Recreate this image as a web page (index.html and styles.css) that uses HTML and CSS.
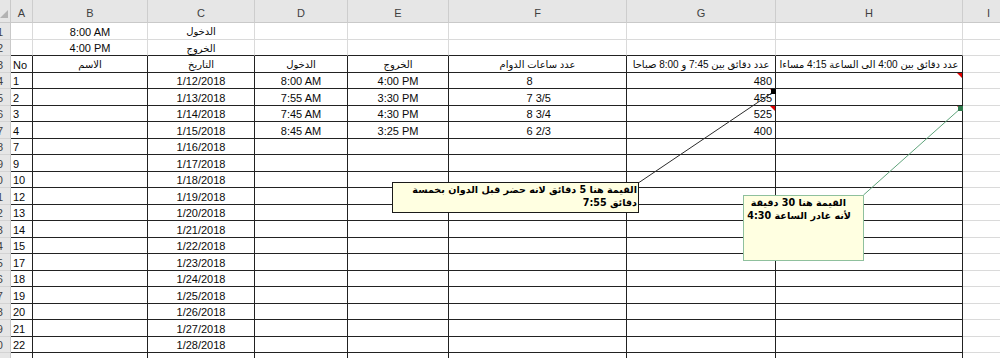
FILE: index.html
```html
<!DOCTYPE html>
<html>
<head>
<meta charset="utf-8">
<link rel="stylesheet" href="styles.css">
</head>
<body>
<div class="sheet">
  <!-- header row -->
  <div class="corner"><i class="tri"></i></div>
  <div class="hd">A</div><div class="hd">B</div><div class="hd">C</div><div class="hd">D</div><div class="hd">E</div><div class="hd">F</div><div class="hd">G</div><div class="hd">H</div><div class="hd">I</div>

  <!-- row 1 -->
  <div class="rh"><span>1</span></div>
  <div class="g"></div><div class="g c">8:00 AM</div><div class="g c ar" dir="rtl">الدخول</div><div class="g"></div><div class="g"></div><div class="g"></div><div class="g"></div><div class="g"></div><div class="g"></div>
  <!-- row 2 -->
  <div class="rh"><span>2</span></div>
  <div class="g tb"></div><div class="g tb c">4:00 PM</div><div class="g tb c ar" dir="rtl">الخروج</div><div class="g tb"></div><div class="g tb"></div><div class="g tb"></div><div class="g tb"></div><div class="g tb"></div><div class="g"></div>
  <!-- row 3 -->
  <div class="rh"><span>3</span></div>
  <div class="t l">No</div><div class="t c ar" dir="rtl">الاسم</div><div class="t c ar" dir="rtl">التاريخ</div><div class="t c ar" dir="rtl">الدخول</div><div class="t c ar" dir="rtl">الخروج</div><div class="t c ar" dir="rtl">عدد ساعات الدوام</div><div class="t c ar" dir="rtl">عدد دقائق بين 7:45 و 8:00 صباحا</div><div class="t c ar" dir="rtl">عدد دقائق بين 4:00 الى الساعة 4:15 مساءا</div><div class="g"></div>
  <!-- row 4 -->
  <div class="rh"><span>4</span></div>
  <div class="t l">1</div><div class="t"></div><div class="t c">1/12/2018</div><div class="t c">8:00 AM</div><div class="t c">4:00 PM</div><div class="t c"><span class="fr">8</span></div><div class="t r">480</div><div class="t note"></div><div class="g"></div>
  <!-- row 5 -->
  <div class="rh"><span>5</span></div>
  <div class="t l">2</div><div class="t"></div><div class="t c">1/13/2018</div><div class="t c">7:55 AM</div><div class="t c">3:30 PM</div><div class="t c"><span class="fr">7 3/5</span></div><div class="t r note">455</div><div class="t"></div><div class="g"></div>
  <!-- row 6 -->
  <div class="rh"><span>6</span></div>
  <div class="t l">3</div><div class="t"></div><div class="t c">1/14/2018</div><div class="t c">7:45 AM</div><div class="t c">4:30 PM</div><div class="t c"><span class="fr">8 3/4</span></div><div class="t r note">525</div><div class="t note"></div><div class="g"></div>
  <!-- row 7 -->
  <div class="rh"><span>7</span></div>
  <div class="t l">4</div><div class="t"></div><div class="t c">1/15/2018</div><div class="t c">8:45 AM</div><div class="t c">3:25 PM</div><div class="t c"><span class="fr">6 2/3</span></div><div class="t r">400</div><div class="t"></div><div class="g"></div>
  <!-- row 8 -->
  <div class="rh"><span>8</span></div>
  <div class="t l">7</div><div class="t"></div><div class="t c">1/16/2018</div><div class="t"></div><div class="t"></div><div class="t"></div><div class="t"></div><div class="t"></div><div class="g"></div>
  <!-- row 9 -->
  <div class="rh"><span>9</span></div>
  <div class="t l">9</div><div class="t"></div><div class="t c">1/17/2018</div><div class="t"></div><div class="t"></div><div class="t"></div><div class="t"></div><div class="t"></div><div class="g"></div>
  <!-- row 10 -->
  <div class="rh"><span>10</span></div>
  <div class="t l">10</div><div class="t"></div><div class="t c">1/18/2018</div><div class="t"></div><div class="t"></div><div class="t"></div><div class="t"></div><div class="t"></div><div class="g"></div>
  <!-- row 11 -->
  <div class="rh"><span>11</span></div>
  <div class="t l">12</div><div class="t"></div><div class="t c">1/19/2018</div><div class="t"></div><div class="t"></div><div class="t"></div><div class="t"></div><div class="t"></div><div class="g"></div>
  <!-- row 12 -->
  <div class="rh"><span>12</span></div>
  <div class="t l">13</div><div class="t"></div><div class="t c">1/20/2018</div><div class="t"></div><div class="t"></div><div class="t"></div><div class="t"></div><div class="t"></div><div class="g"></div>
  <!-- row 13 -->
  <div class="rh"><span>13</span></div>
  <div class="t l">14</div><div class="t"></div><div class="t c">1/21/2018</div><div class="t"></div><div class="t"></div><div class="t"></div><div class="t"></div><div class="t"></div><div class="g"></div>
  <!-- row 14 -->
  <div class="rh"><span>14</span></div>
  <div class="t l">15</div><div class="t"></div><div class="t c">1/22/2018</div><div class="t"></div><div class="t"></div><div class="t"></div><div class="t"></div><div class="t"></div><div class="g"></div>
  <!-- row 15 -->
  <div class="rh"><span>15</span></div>
  <div class="t l">17</div><div class="t"></div><div class="t c">1/23/2018</div><div class="t"></div><div class="t"></div><div class="t"></div><div class="t"></div><div class="t"></div><div class="g"></div>
  <!-- row 16 -->
  <div class="rh"><span>16</span></div>
  <div class="t l">18</div><div class="t"></div><div class="t c">1/24/2018</div><div class="t"></div><div class="t"></div><div class="t"></div><div class="t"></div><div class="t"></div><div class="g"></div>
  <!-- row 17 -->
  <div class="rh"><span>17</span></div>
  <div class="t l">19</div><div class="t"></div><div class="t c">1/25/2018</div><div class="t"></div><div class="t"></div><div class="t"></div><div class="t"></div><div class="t"></div><div class="g"></div>
  <!-- row 18 -->
  <div class="rh"><span>18</span></div>
  <div class="t l">20</div><div class="t"></div><div class="t c">1/26/2018</div><div class="t"></div><div class="t"></div><div class="t"></div><div class="t"></div><div class="t"></div><div class="g"></div>
  <!-- row 19 -->
  <div class="rh"><span>19</span></div>
  <div class="t l">21</div><div class="t"></div><div class="t c">1/27/2018</div><div class="t"></div><div class="t"></div><div class="t"></div><div class="t"></div><div class="t"></div><div class="g"></div>
  <!-- row 20 -->
  <div class="rh"><span>20</span></div>
  <div class="t l">22</div><div class="t"></div><div class="t c">1/28/2018</div><div class="t"></div><div class="t"></div><div class="t"></div><div class="t"></div><div class="t"></div><div class="g"></div>
  <!-- row 21 -->
  <div class="rh"><span>21</span></div>
  <div class="t"></div><div class="t"></div><div class="t"></div><div class="t"></div><div class="t"></div><div class="t"></div><div class="t"></div><div class="t"></div><div class="g"></div>

  <!-- comment connectors -->
  <svg class="links" width="1000" height="358" viewBox="0 0 1000 358">
    <line x1="639" y1="182.5" x2="774" y2="91.5" stroke="#2b2b2b" stroke-width="1"/>
    <rect x="771" y="89" width="5" height="5" fill="#000"/>
    <line x1="863.5" y1="195" x2="961" y2="108" stroke="#5fa47b" stroke-width="1"/>
    <rect x="958" y="106" width="5" height="5" fill="#2f7a4c"/>
  </svg>

  <!-- comments -->
  <div class="cm cm1" dir="rtl">
    <div>القيمة هنا 5 دقائق لانه حضر قبل الدوان بخمسة</div>
    <div>دقائق 7:55</div>
  </div>
  <div class="cm cm2" dir="rtl">
    <div class="ln1">القيمة هنا 30 دقيقة</div>
    <div>لأنه غادر الساعة 4:30</div>
  </div>
</div>
</body>
</html>
```

FILE: styles.css
```css
html, body {
  margin: 0;
  padding: 0;
  background: #ffffff;
  width: 1000px;
  height: 358px;
  overflow: hidden;
}

body {
  font-family: "Liberation Sans", "DejaVu Sans", sans-serif;
  font-size: 11px;
  color: #0a0a0a;
}

.sheet {
  position: relative;
  display: grid;
  grid-template-columns: 11px 22px 115px 107px 93px 101px 178px 149px 187px 52px;
  grid-template-rows: 23px repeat(10, 17px 16px) 17px;
  width: 1015px;
}

.sheet > div {
  box-sizing: border-box;
  display: flex;
  align-items: center;
  white-space: nowrap;
  overflow: hidden;
  min-width: 0;
  padding-top: 1px;
}

.corner {
  background: #e6e6e6;
  border-right: 1px solid #c9c9c9;
  border-bottom: 1px solid #c9c9c9;
  align-items: flex-end !important;
  padding-bottom: 4px;
}

.tri {
  display: block;
  width: 0;
  height: 0;
  border-left: 8px solid transparent;
  border-bottom: 8px solid #b3b3b3;
}

.hd {
  background: #e6e6e6;
  border-right: 1px solid #cdcdcd;
  border-bottom: 1px solid #c9c9c9;
  justify-content: center;
  color: #3f3f3f;
  font-size: 11px;
}

.sheet > .hd {
  padding-top: 3px;
}

.rh {
  background: #e6e6e6;
  border-right: 1px solid #c9c9c9;
  border-bottom: 1px solid #d3d3d3;
  justify-content: flex-end;
  padding-right: 7px;
  color: #3f3f3f;
}

.g {
  border-right: 1px solid #dadada;
  border-bottom: 1px solid #dadada;
}

.g.tb {
  border-bottom: 1px solid #222222;
}

.t {
  position: relative;
  border-right: 1px solid #222222;
  border-bottom: 1px solid #222222;
}

.c { justify-content: center; }
.l { justify-content: flex-start; padding-left: 2px; }
.r { justify-content: flex-end; padding-right: 3px; }

.ar {
  font-size: 10px;
}

.fr {
  display: inline-block;
  width: 22px;
  text-align: left;
}

.note::after {
  content: "";
  position: absolute;
  top: 0;
  right: 0;
  width: 0;
  height: 0;
  border-top: 5px solid #e00000;
  border-left: 5px solid transparent;
}

.links {
  position: absolute;
  left: 0;
  top: 0;
  pointer-events: none;
}

.sheet > .cm {
  position: absolute;
  display: block;
  box-sizing: border-box;
  background: #ffffe1;
  font-family: "DejaVu Sans", "Liberation Sans", sans-serif;
  font-weight: bold;
  font-size: 9.6px;
  line-height: 12.5px;
  color: #000000;
  text-align: right;
  white-space: nowrap;
  overflow: visible;
}

.cm1 {
  left: 392px;
  top: 182px;
  width: 247px;
  height: 31px;
  border: 1px solid #1a1a1a;
  padding: 2px 1px 0 0;
}

.cm2 {
  left: 743px;
  top: 195px;
  width: 121px;
  height: 66px;
  border: 1px solid #8fc09d;
  padding: 2px 12px 0 0;
}

.cm2 .ln1 {
  padding-right: 5px;
}
```
